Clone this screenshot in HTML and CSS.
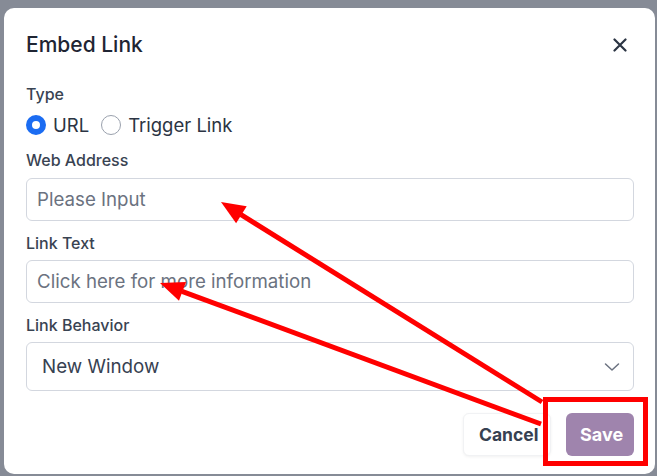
FILE: index.html
```html
<!DOCTYPE html>
<html lang="en">
<head>
<meta charset="utf-8">
<title>Embed Link</title>
<link rel="stylesheet" href="styles.css">
</head>
<body>
<div class="modal">
  <div class="header">
    <h1 class="title">Embed Link</h1>
    <button class="close" aria-label="Close">
      <svg width="14" height="14" viewBox="0 0 14 14"><path d="M1.5 1.5 L12.5 12.5 M12.5 1.5 L1.5 12.5" stroke="#2b3443" stroke-width="2.2" stroke-linecap="round"/></svg>
    </button>
  </div>
  <div class="field type-field">
    <div class="label">Type</div>
    <div class="radios">
      <label class="radio"><span class="dot checked"></span><span>URL</span></label>
      <label class="radio"><span class="dot"></span><span>Trigger Link</span></label>
    </div>
  </div>
  <div class="field first-input">
    <div class="label">Web Address</div>
    <div class="input placeholder">Please Input</div>
  </div>
  <div class="field">
    <div class="label">Link Text</div>
    <div class="input placeholder">Click here for more information</div>
  </div>
  <div class="field">
    <div class="label">Link Behavior</div>
    <div class="select">
      <span>New Window</span>
      <svg width="16" height="10" viewBox="0 0 16 10"><path d="M1.5 2 L8 8 L14.5 2" fill="none" stroke="#6b7280" stroke-width="1.5" stroke-linecap="round" stroke-linejoin="round"/></svg>
    </div>
  </div>
  <div class="footer">
    <button class="btn cancel">Cancel</button>
    <button class="btn save">Save</button>
  </div>
</div>
<svg class="annot" width="657" height="476" viewBox="0 0 657 476">
  <line x1="542" y1="402" x2="241" y2="214.7" stroke="#ff0000" stroke-width="5"/>
  <polygon points="221,202 246.7,206.2 236.1,223.2" fill="#ff0000"/>
  <line x1="541" y1="424" x2="182" y2="291.3" stroke="#ff0000" stroke-width="5"/>
  <polygon points="160,283 186,281.9 179,300.7" fill="#ff0000"/>
  <rect x="545.5" y="399.5" width="100" height="64" fill="none" stroke="#ff0000" stroke-width="5"/>
</svg>
</body>
</html>
```

FILE: styles.css
```css
html, body {
  margin: 0;
  padding: 0;
}
body {
  background: #868b96;
  font-family: Inter, "Noto Sans", sans-serif;
  width: 657px;
  height: 476px;
  overflow: hidden;
  position: relative;
}
.modal {
  box-sizing: border-box;
  margin: 8px 0 0 4px;
  width: 651px;
  height: 466px;
  background: #ffffff;
  border-radius: 10px;
  padding: 23px 21px 0 22px;
  display: flex;
  flex-direction: column;
}
.header {
  display: flex;
  align-items: center;
  justify-content: space-between;
  height: 28px;
}
.title {
  margin: 0;
  font-size: 21px;
  line-height: 28px;
  font-weight: 500;
  color: #1f2533;
}
.close {
  border: 0;
  background: none;
  padding: 0;
  margin-right: 7px;
  width: 14px;
  height: 14px;
  display: flex;
}
.field {
  display: flex;
  flex-direction: column;
  margin-top: 12px;
}
.field.first-input {
  margin-top: 13px;
}
.type-field {
  margin-top: 25px;
}
.label {
  font-size: 16px;
  line-height: 20px;
  color: #394352;
  font-weight: 500;
  margin-bottom: 7px;
}
.field.first-input .label {
  margin-bottom: 8px;
}
.type-field .label {
  margin-bottom: 9px;
}
.radios {
  display: flex;
  align-items: center;
  height: 24px;
  gap: 12px;
}
.radio {
  display: flex;
  align-items: center;
  gap: 7px;
  font-size: 18.5px;
  color: #2b3443;
}
.dot {
  box-sizing: border-box;
  width: 20px;
  height: 20px;
  border-radius: 50%;
  border: 1px solid #9aa1ad;
  background: #fff;
}
.dot.checked {
  border: 6.5px solid #1b6cf2;
  background: #fff;
}
.input {
  box-sizing: border-box;
  height: 43px;
  border: 1px solid #d3d7df;
  border-radius: 6px;
  padding: 0 10px;
  display: flex;
  align-items: center;
  font-size: 18.7px;
}
.placeholder {
  color: #6b7280;
}
.select {
  box-sizing: border-box;
  height: 49px;
  border: 1px solid #d3d7df;
  border-radius: 6px;
  padding: 0 13px 0 15px;
  display: flex;
  align-items: center;
  justify-content: space-between;
  font-size: 18.8px;
  color: #374151;
  font-weight: 400;
}
.footer {
  display: flex;
  justify-content: flex-end;
  gap: 15px;
  margin-top: 22px;
}
.btn {
  font-family: Inter, "Noto Sans", sans-serif;
  font-size: 18px;
  font-weight: 700;
  height: 43px;
  border-radius: 6px;
  padding: 0 14px;
  cursor: pointer;
}
.cancel {
  background: #fff;
  color: #374151;
  border: 1px solid #f1f2f4;
  box-shadow: 0 1px 3px rgba(0, 0, 0, 0.06);
  padding: 0 15px;
  width: 88px;
  font-size: 17.5px;
  text-align: left;
}
.save {
  background: #9f84ad;
  color: #ffffff;
  border: 0;
  width: 68px;
}
.annot {
  position: absolute;
  top: 0;
  left: 0;
  pointer-events: none;
}
```
